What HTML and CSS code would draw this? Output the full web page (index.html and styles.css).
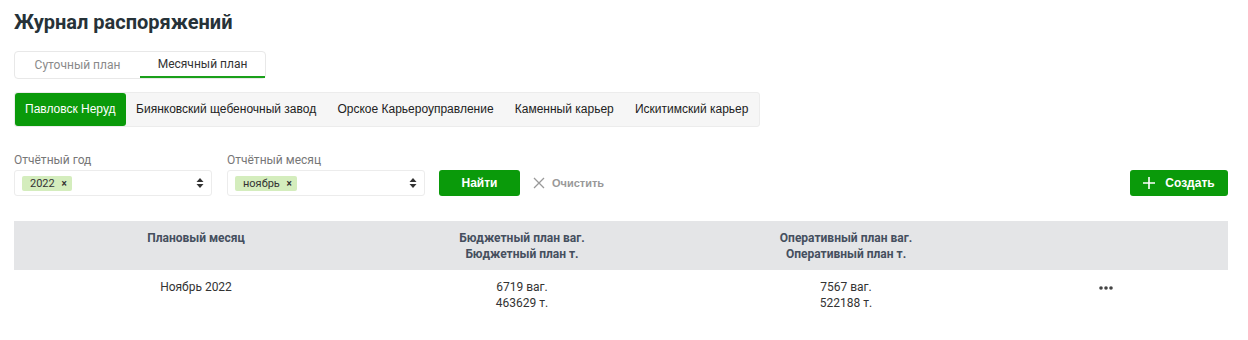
FILE: index.html
```html
<!DOCTYPE html>
<html lang="ru">
<head>
  <meta charset="UTF-8">
  <title>Журнал распоряжений</title>
  <link rel="stylesheet" href="styles.css">
</head>
<body>
  <div class="page">
    <h1 class="title">Журнал распоряжений</h1>

    <div class="plan-tabs">
      <div class="plan-tab">Суточный план</div>
      <div class="plan-tab active">Месячный план</div>
    </div>

    <div class="companies">
      <div class="company active">Павловск Неруд</div>
      <div class="company">Биянковский щебеночный завод</div>
      <div class="company">Орское Карьероуправление</div>
      <div class="company">Каменный карьер</div>
      <div class="company">Искитимский карьер</div>
    </div>

    <div class="filters">
      <div class="field">
        <div class="field-label">Отчётный год</div>
        <div class="select">
          <span class="tag">2022 <span class="tag-x">×</span></span>
          <svg class="arrows" width="8" height="12" viewBox="0 0 8 12"><path d="M4 1 L7.5 5 H0.5 Z M4 11 L7.5 7 H0.5 Z" fill="#333"/></svg>
        </div>
      </div>
      <div class="field">
        <div class="field-label">Отчётный месяц</div>
        <div class="select">
          <span class="tag">ноябрь <span class="tag-x">×</span></span>
          <svg class="arrows" width="8" height="12" viewBox="0 0 8 12"><path d="M4 1 L7.5 5 H0.5 Z M4 11 L7.5 7 H0.5 Z" fill="#333"/></svg>
        </div>
      </div>
      <button class="btn btn-green find">Найти</button>
      <button class="btn-clear">
        <svg width="12" height="12" viewBox="0 0 12 12"><path d="M1 1 L11 11 M11 1 L1 11" stroke="#999" stroke-width="1.3"/></svg>
        Очистить
      </button>
      <button class="btn btn-green create">
        <svg width="12" height="12" viewBox="0 0 12 12"><path d="M6 0 V12 M0 6 H12" stroke="#fff" stroke-width="1.6"/></svg>
        Создать
      </button>
    </div>

    <div class="table">
      <div class="th">Плановый месяц</div>
      <div class="th">Бюджетный план ваг.<br>Бюджетный план т.</div>
      <div class="th">Оперативный план ваг.<br>Оперативный план т.</div>
      <div class="th"></div>

      <div class="td">Ноябрь 2022</div>
      <div class="td">6719 ваг.<br>463629 т.</div>
      <div class="td">7567 ваг.<br>522188 т.</div>
      <div class="td dots">
        <svg width="14" height="4" viewBox="0 0 14 4"><circle cx="2" cy="2" r="1.8" fill="#444"/><circle cx="7" cy="2" r="1.8" fill="#444"/><circle cx="12" cy="2" r="1.8" fill="#444"/></svg>
      </div>
    </div>
  </div>
</body>
</html>
```

FILE: styles.css
```css
body {
  margin: 0;
  background: #fff;
  font-family: Roboto, "Liberation Sans", sans-serif;
  color: #333;
}
.page {
  padding: 10px 20px 0 14px;
}
.title {
  margin: 0;
  font-size: 20px;
  font-weight: 700;
  color: #263238;
  line-height: 24px;
}
.plan-tabs {
  display: inline-flex;
  margin-top: 17px;
  border: 1px solid #e8e8e8;
  border-radius: 4px;
  height: 26px;
}
.plan-tab {
  font-size: 12px;
  color: #8a8a8a;
  width: 125px;
  line-height: 26px;
  text-align: center;
  white-space: nowrap;
}
.plan-tab.active {
  color: #333;
  border-bottom: 2px solid #1aa01a;
  line-height: 24px;
  height: 24px;
}
.companies {
  display: flex;
  width: fit-content;
  margin-top: 13px;
  background: #f6f6f6;
  border: 1px solid #ececec;
  border-radius: 3px;
  height: 33px;
}
.company {
  font-family: "Liberation Sans", Arial, sans-serif;
  font-size: 12px;
  color: #222;
  padding: 0 10.6px;
  line-height: 33px;
  white-space: nowrap;
}
.company.active {
  background: #0a9a0a;
  color: #fff;
  border-radius: 3px;
  padding: 0 10px;
}
.filters {
  display: flex;
  align-items: flex-end;
  margin-top: 26px;
}
.field {
  margin-right: 15px;
}
.field-label {
  font-size: 12px;
  color: #777;
  margin-bottom: 3px;
}
.select {
  width: 198px;
  height: 26px;
  border: 1px solid #ececec;
  border-radius: 3px;
  box-sizing: border-box;
  display: flex;
  align-items: center;
  justify-content: space-between;
  padding: 0 7px;
}
.tag {
  background: #d4edbd;
  border-radius: 2px;
  font-size: 11px;
  color: #333;
  padding: 1px 5px 1px 8px;
}
.tag-x {
  font-size: 10px;
  margin-left: 4px;
  font-weight: 700;
}
.btn {
  border: none;
  border-radius: 3px;
  height: 26px;
  font-family: "Liberation Sans", Arial, sans-serif;
  font-size: 12px;
  font-weight: 700;
  cursor: pointer;
}
.btn-green {
  background: #0a9a0a;
  color: #fff;
}
.find {
  width: 81px;
  margin-left: -1px;
}
.btn-clear {
  border: none;
  background: none;
  height: 26px;
  margin-left: 7px;
  display: flex;
  align-items: center;
  gap: 7px;
  font-family: "Liberation Sans", Arial, sans-serif;
  font-size: 11px;
  font-weight: 700;
  color: #999;
}
.create {
  margin-left: auto;
  width: 98px;
  display: flex;
  align-items: center;
  justify-content: center;
  gap: 10px;
}
.table {
  display: grid;
  grid-template-columns: 364px 288px 360px 1fr;
  width: 1214px;
  margin-top: 25px;
}
.th {
  background: #e4e5e7;
  font-size: 12px;
  font-weight: 700;
  color: #454f5e;
  text-align: center;
  line-height: 16px;
  padding: 9px 0 0;
  height: 40px;
}
.td {
  font-size: 12px;
  color: #333;
  text-align: center;
  line-height: 16px;
  padding: 9px 0 20px;
}
.dots {
  padding-right: 42px;
}
.dots svg {
  vertical-align: middle;
}
```
